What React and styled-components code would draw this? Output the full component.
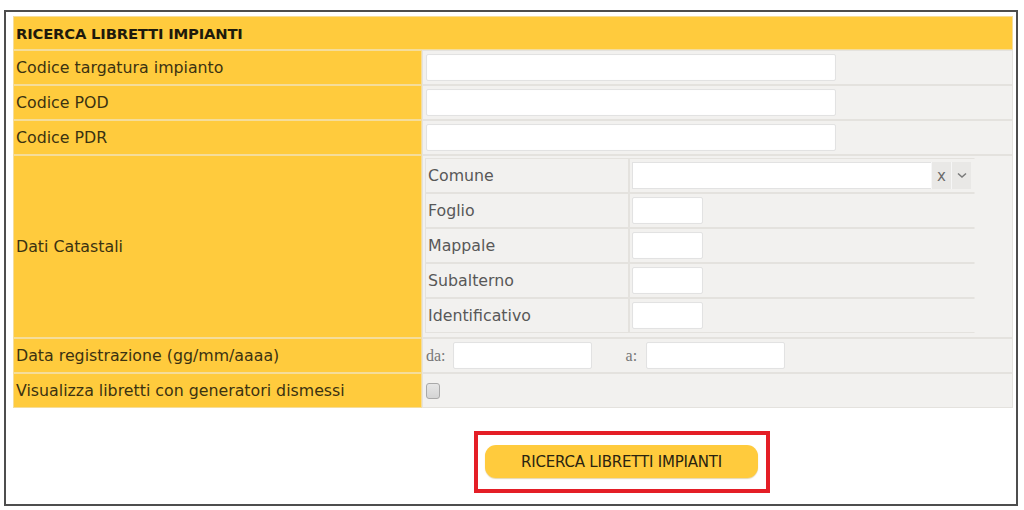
import React from "react";
import styled, { createGlobalStyle } from "styled-components";

const Global = createGlobalStyle`
  html, body { margin: 0; padding: 0; background: #ffffff; }
  body { font-family: "DejaVu Sans", "Liberation Sans", sans-serif; }
`;

const Frame = styled.div`
  box-sizing: border-box;
  margin: 10px 0 0 4px;
  width: 1014px;
  height: 496px;
  border: 2px solid #4d4d4d;
  padding: 4px 0 0 7px;
  background: #fff;
`;

const Table = styled.table`
  width: 1000px;
  border-collapse: separate;
  border-spacing: 0;
  table-layout: fixed;
`;

const Col = styled.col`
  width: ${(p) => (p.$w ? `${p.$w}px` : "auto")};
`;

const HeadCell = styled.th`
  box-sizing: border-box;
  height: 34px;
  padding: 0 0 0 2px;
  background: #ffcb3d;
  border: 1px solid #f5dd9a;
  text-align: left;
  font-size: 14.8px;
  font-weight: bold;
  color: #1e1a0c;
  letter-spacing: -0.2px;
`;

const Label = styled.td`
  box-sizing: border-box;
  height: ${(p) => p.$h || 35}px;
  padding: 0 0 0 2px;
  background: #ffcb3d;
  border: 1px solid #f5dd9a;
  font-size: 15.8px;
  color: #3b3211;
  vertical-align: middle;
  white-space: nowrap;
`;

const Value = styled.td`
  box-sizing: border-box;
  height: ${(p) => p.$h || 35}px;
  padding: ${(p) => (p.$nested ? "2px 0 3px 2px" : "0 0 0 3px")};
  background: #f2f1ef;
  border: 1px solid #e4e2de;
  vertical-align: ${(p) => (p.$nested ? "top" : "middle")};
`;

const TextInput = styled.input`
  box-sizing: border-box;
  display: block;
  width: ${(p) => p.$w}px;
  height: 27px;
  margin: 0;
  border: 1px solid #e2e2e2;
  border-radius: 2px;
  background: #fff;
  box-shadow: inset 0 0 1px rgba(0, 0, 0, 0.06);
  outline: none;
`;

const NestedTable = styled.table`
  width: 550px;
  border-collapse: separate;
  border-spacing: 0;
  table-layout: fixed;
`;

const SubLabel = styled.td`
  box-sizing: border-box;
  height: 35px;
  padding: 0 0 0 2px;
  border: 1px solid #e4e2de;
  font-size: 15.8px;
  color: #585858;
  vertical-align: middle;
  white-space: nowrap;
`;

const SubValue = styled.td`
  box-sizing: border-box;
  height: 35px;
  padding: 0 0 0 2px;
  border: 1px solid #e4e2de;
  border-right-color: transparent;
  vertical-align: middle;
`;

const Combo = styled.div`
  display: flex;
  align-items: stretch;
  width: 339px;
  height: 27px;
`;

const ComboField = styled.input`
  box-sizing: border-box;
  flex: 1;
  min-width: 0;
  height: 27px;
  margin: 0;
  border: 1px solid #e2e2e2;
  border-right: none;
  background: #fff;
  outline: none;
`;

const ComboBtn = styled.span`
  box-sizing: border-box;
  display: flex;
  align-items: center;
  justify-content: center;
  width: ${(p) => p.$w}px;
  background: #e9e8e6;
  border-left: 1px solid #f6f6f6;
  color: #6b6b6b;
  font-size: 15px;
  font-family: "DejaVu Sans", sans-serif;
`;

const DateRow = styled.div`
  display: flex;
  align-items: center;
`;

const DateLabel = styled.span`
  font-family: "Liberation Serif", serif;
  font-size: 16px;
  color: #777;
  margin-right: ${(p) => p.$mr}px;
`;

const Spacer = styled.span`
  width: ${(p) => p.$w}px;
`;

const Check = styled.span`
  box-sizing: border-box;
  display: block;
  width: 14px;
  height: 16px;
  border: 1px solid #a9a9a9;
  border-radius: 3px;
  background: linear-gradient(#e6e6e6, #d4d4d4);
  margin-top: 1px;
`;

const Footer = styled.div`
  display: flex;
  padding: 23px 0 0 461px;
`;

const Highlight = styled.div`
  box-sizing: border-box;
  width: 296px;
  height: 62px;
  border: 4px solid #e41e26;
  padding: 10px 0 0 7px;
`;

const Button = styled.button`
  box-sizing: border-box;
  width: 273px;
  height: 33px;
  border: none;
  border-radius: 11px;
  background: #ffcb3d;
  box-shadow: 0 1px 1px rgba(180, 140, 30, 0.35);
  font-family: "DejaVu Sans", sans-serif;
  font-size: 15px;
  color: #2a2410;
  letter-spacing: -0.2px;
  cursor: pointer;
  padding: 0;
`;

const catasto = ["Foglio", "Mappale", "Subalterno", "Identificativo"];

export default function App() {
  return (
    <>
      <Global />
      <Frame>
        <Table>
          <colgroup>
            <Col $w={409} />
            <Col />
          </colgroup>
          <tbody>
            <tr>
              <HeadCell colSpan={2}>RICERCA LIBRETTI IMPIANTI</HeadCell>
            </tr>
            {["Codice targatura impianto", "Codice POD", "Codice PDR"].map((l) => (
              <tr key={l}>
                <Label>{l}</Label>
                <Value>
                  <TextInput $w={410} />
                </Value>
              </tr>
            ))}
            <tr>
              <Label $h={183}>Dati Catastali</Label>
              <Value $h={183} $nested>
                <NestedTable>
                  <colgroup>
                    <Col $w={204} />
                    <Col />
                  </colgroup>
                  <tbody>
                    <tr>
                      <SubLabel>Comune</SubLabel>
                      <SubValue>
                        <Combo>
                          <ComboField />
                          <ComboBtn $w={20}>x</ComboBtn>
                          <ComboBtn $w={20}>
                            <svg width="10" height="7" viewBox="0 0 10 7">
                              <path d="M1 1.5 L5 5 L9 1.5" fill="none" stroke="#7a7a7a" strokeWidth="1.5" />
                            </svg>
                          </ComboBtn>
                        </Combo>
                      </SubValue>
                    </tr>
                    {catasto.map((c) => (
                      <tr key={c}>
                        <SubLabel>{c}</SubLabel>
                        <SubValue>
                          <TextInput $w={71} />
                        </SubValue>
                      </tr>
                    ))}
                  </tbody>
                </NestedTable>
              </Value>
            </tr>
            <tr>
              <Label>Data registrazione (gg/mm/aaaa)</Label>
              <Value>
                <DateRow>
                  <DateLabel $mr={7}>da:</DateLabel>
                  <TextInput $w={139} />
                  <Spacer $w={34} />
                  <DateLabel $mr={9}>a:</DateLabel>
                  <TextInput $w={139} />
                </DateRow>
              </Value>
            </tr>
            <tr>
              <Label>Visualizza libretti con generatori dismessi</Label>
              <Value>
                <Check />
              </Value>
            </tr>
          </tbody>
        </Table>
        <Footer>
          <Highlight>
            <Button>RICERCA LIBRETTI IMPIANTI</Button>
          </Highlight>
        </Footer>
      </Frame>
    </>
  );
}
